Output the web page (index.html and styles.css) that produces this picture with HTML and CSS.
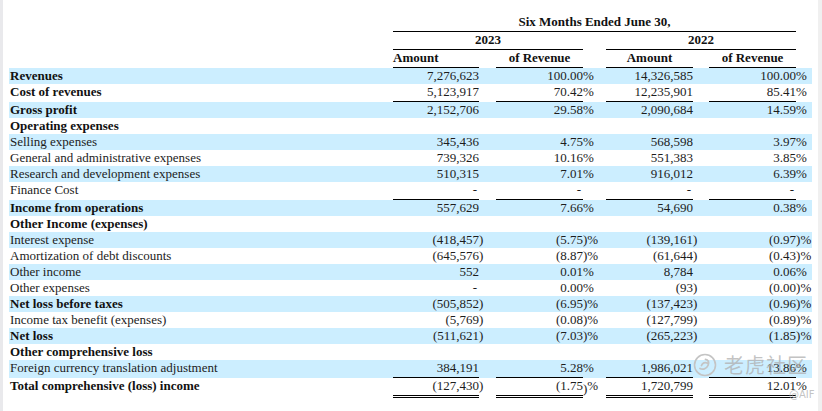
FILE: index.html
```html
<!DOCTYPE html>
<html>
<head>
<meta charset="utf-8">
<link rel="stylesheet" href="styles.css">
</head>
<body>
<div class="page">
<table class="fin">
<colgroup>
<col class="c-label"><col class="c-amt"><col class="c-s1"><col class="c-pct"><col class="c-s2"><col class="c-amt22"><col class="c-s3"><col class="c-pct22"><col class="c-s4">
</colgroup>
<thead>
<tr><td></td><td colspan="7" class="hd rule">Six Months Ended June 30,</td><td></td></tr>
<tr><td></td><td colspan="3" class="hd rule">2023</td><td></td><td colspan="3" class="hd rule">2022</td><td></td></tr>
<tr><td></td><td class="hd rule left">Amount</td><td></td><td class="hd rule">of Revenue</td><td></td><td class="hd rule">Amount</td><td></td><td class="hd rule">of Revenue</td><td></td></tr>
</thead>
<tbody>
<tr class="band"><td class="lbl b">Revenues</td><td class="n">7,276,623</td><td class="s"></td><td class="n">100.00</td><td class="s">%</td><td class="n">14,326,585</td><td class="s"></td><td class="n">100.00</td><td class="s">%</td></tr>
<tr><td class="lbl b">Cost of revenues</td><td class="n rule">5,123,917</td><td class="s"></td><td class="n rule">70.42</td><td class="s">%</td><td class="n rule">12,235,901</td><td class="s"></td><td class="n rule">85.41</td><td class="s">%</td></tr>
<tr class="band"><td class="lbl b">Gross profit</td><td class="n">2,152,706</td><td class="s"></td><td class="n">29.58</td><td class="s">%</td><td class="n">2,090,684</td><td class="s"></td><td class="n">14.59</td><td class="s">%</td></tr>
<tr><td class="lbl b">Operating expenses</td><td></td><td></td><td></td><td></td><td></td><td></td><td></td><td></td></tr>
<tr class="band"><td class="lbl">Selling expenses</td><td class="n">345,436</td><td class="s"></td><td class="n">4.75</td><td class="s">%</td><td class="n">568,598</td><td class="s"></td><td class="n">3.97</td><td class="s">%</td></tr>
<tr><td class="lbl">General and administrative expenses</td><td class="n">739,326</td><td class="s"></td><td class="n">10.16</td><td class="s">%</td><td class="n">551,383</td><td class="s"></td><td class="n">3.85</td><td class="s">%</td></tr>
<tr class="band"><td class="lbl">Research and development expenses</td><td class="n">510,315</td><td class="s"></td><td class="n">7.01</td><td class="s">%</td><td class="n">916,012</td><td class="s"></td><td class="n">6.39</td><td class="s">%</td></tr>
<tr><td class="lbl">Finance Cost</td><td class="n rule dash">-</td><td class="s"></td><td class="n rule dash">-</td><td class="s"></td><td class="n rule dash">-</td><td class="s"></td><td class="n rule dash">-</td><td class="s"></td></tr>
<tr class="band"><td class="lbl b">Income from operations</td><td class="n">557,629</td><td class="s"></td><td class="n">7.66</td><td class="s">%</td><td class="n">54,690</td><td class="s"></td><td class="n">0.38</td><td class="s">%</td></tr>
<tr><td class="lbl b">Other Income (expenses)</td><td></td><td></td><td></td><td></td><td></td><td></td><td></td><td></td></tr>
<tr class="band"><td class="lbl">Interest expense</td><td class="n">(418,457</td><td class="s">)</td><td class="n">(5.75</td><td class="s">)%</td><td class="n">(139,161</td><td class="s">)</td><td class="n">(0.97</td><td class="s">)%</td></tr>
<tr><td class="lbl">Amortization of debt discounts</td><td class="n">(645,576</td><td class="s">)</td><td class="n">(8.87</td><td class="s">)%</td><td class="n">(61,644</td><td class="s">)</td><td class="n">(0.43</td><td class="s">)%</td></tr>
<tr class="band"><td class="lbl">Other income</td><td class="n">552</td><td class="s"></td><td class="n">0.01</td><td class="s">%</td><td class="n">8,784</td><td class="s"></td><td class="n">0.06</td><td class="s">%</td></tr>
<tr><td class="lbl">Other expenses</td><td class="n dash">-</td><td class="s"></td><td class="n">0.00</td><td class="s">%</td><td class="n">(93</td><td class="s">)</td><td class="n">(0.00</td><td class="s">)%</td></tr>
<tr class="band"><td class="lbl b">Net loss before taxes</td><td class="n">(505,852</td><td class="s">)</td><td class="n">(6.95</td><td class="s">)%</td><td class="n">(137,423</td><td class="s">)</td><td class="n">(0.96</td><td class="s">)%</td></tr>
<tr><td class="lbl">Income tax benefit (expenses)</td><td class="n">(5,769</td><td class="s">)</td><td class="n">(0.08</td><td class="s">)%</td><td class="n">(127,799</td><td class="s">)</td><td class="n">(0.89</td><td class="s">)%</td></tr>
<tr class="band"><td class="lbl b">Net loss</td><td class="n">(511,621</td><td class="s">)</td><td class="n">(7.03</td><td class="s">)%</td><td class="n">(265,223</td><td class="s">)</td><td class="n">(1.85</td><td class="s">)%</td></tr>
<tr><td class="lbl b">Other comprehensive loss</td><td></td><td></td><td></td><td></td><td></td><td></td><td></td><td></td></tr>
<tr class="band"><td class="lbl">Foreign currency translation adjustment</td><td class="n rule">384,191</td><td class="s"></td><td class="n rule">5.28</td><td class="s"><span class="up1">%</span></td><td class="n rule">1,986,021</td><td class="s"></td><td class="n rule">13.86</td><td class="s"><span class="up1">%</span></td></tr>
<tr><td class="lbl b">Total comprehensive (loss) income</td><td class="n dbl">(127,430</td><td class="s">)</td><td class="n dbl">(1.75</td><td class="s">)<span class="up2">%</span></td><td class="n dbl">1,720,799</td><td class="s"></td><td class="n dbl">12.01</td><td class="s"><span class="up2">%</span></td></tr>
</tbody>
</table>
<div class="wm">
<svg class="wm-icon" width="24" height="24" viewBox="0 0 24 24"><circle cx="12" cy="12" r="10.5" fill="none" stroke="#c4c4c4" stroke-width="1.6"/><path d="M7 15.5c2.5 1.5 6.5 0.5 8-3s0-6-2.5-6.2M8.5 12.5c1-2.5 3.5-3.5 5.5-2.5" fill="none" stroke="#c4c4c4" stroke-width="1.8" stroke-linecap="round"/></svg>
<span class="wm-text">老虎社区</span>
</div>
<div class="wm-user">@AIF</div>
</div>
</body>
</html>
```
FILE: styles.css
```css
html, body {
  margin: 0;
  padding: 0;
  background: #ffffff;
}
body {
  width: 822px;
  height: 411px;
  box-sizing: border-box;
  border-left: 3px solid #e9e9ec;
  border-right: 4px solid #f0f0f0;
  overflow: hidden;
}
.page {
  position: relative;
  padding: 14px 0 0 6px;
  height: 411px;
  box-sizing: border-box;
}
.fin {
  border-collapse: separate;
  border-spacing: 0;
  table-layout: fixed;
  width: 803px;
  font-family: "Liberation Serif", "Times New Roman", serif;
  font-size: 13px;
  color: #1c1c1c;
}
.c-label { width: 384px; }
.c-amt { width: 86px; }
.c-s1 { width: 17px; }
.c-pct { width: 87px; }
.c-s2 { width: 23px; }
.c-amt22 { width: 87px; }
.c-s3 { width: 16px; }
.c-pct22 { width: 87px; }
.c-s4 { width: 16px; }
.fin td {
  padding: 0;
  line-height: 16px;
  height: 16px;
  vertical-align: top;
  white-space: nowrap;
}
.fin .hd {
  font-weight: bold;
  text-align: center;
  color: #111;
}
.fin .hd.left { text-align: left; }
.fin .rule {
  padding-bottom: 1px;
  border-bottom: 1px solid #000;
}
.fin .dbl {
  padding-bottom: 1px;
  border-bottom: 3px double #000;
}
.band td { background: #cceeff; }
.fin td.lbl { padding-left: 1px; }
.b { font-weight: bold; color: #111; }
.n { text-align: right; }
.fin td.n.dash { padding-right: 2px; }
.s { text-align: left; overflow: visible; }
.up1 { vertical-align: 2px; }
.up2 { vertical-align: 3px; }
.wm {
  position: absolute;
  left: 690px;
  top: 353px;
  display: flex;
  align-items: center;
  gap: 7px;
}
.wm-text {
  font-family: "Noto Sans CJK SC", sans-serif;
  font-size: 20px;
  line-height: 24px;
  letter-spacing: 1px;
  color: rgba(175, 175, 175, 0.75);
}
.wm-user {
  position: absolute;
  left: 786px;
  top: 389px;
  font-family: "DejaVu Sans", sans-serif;
  font-size: 10px;
  color: rgba(180, 180, 180, 0.8);
}
```
